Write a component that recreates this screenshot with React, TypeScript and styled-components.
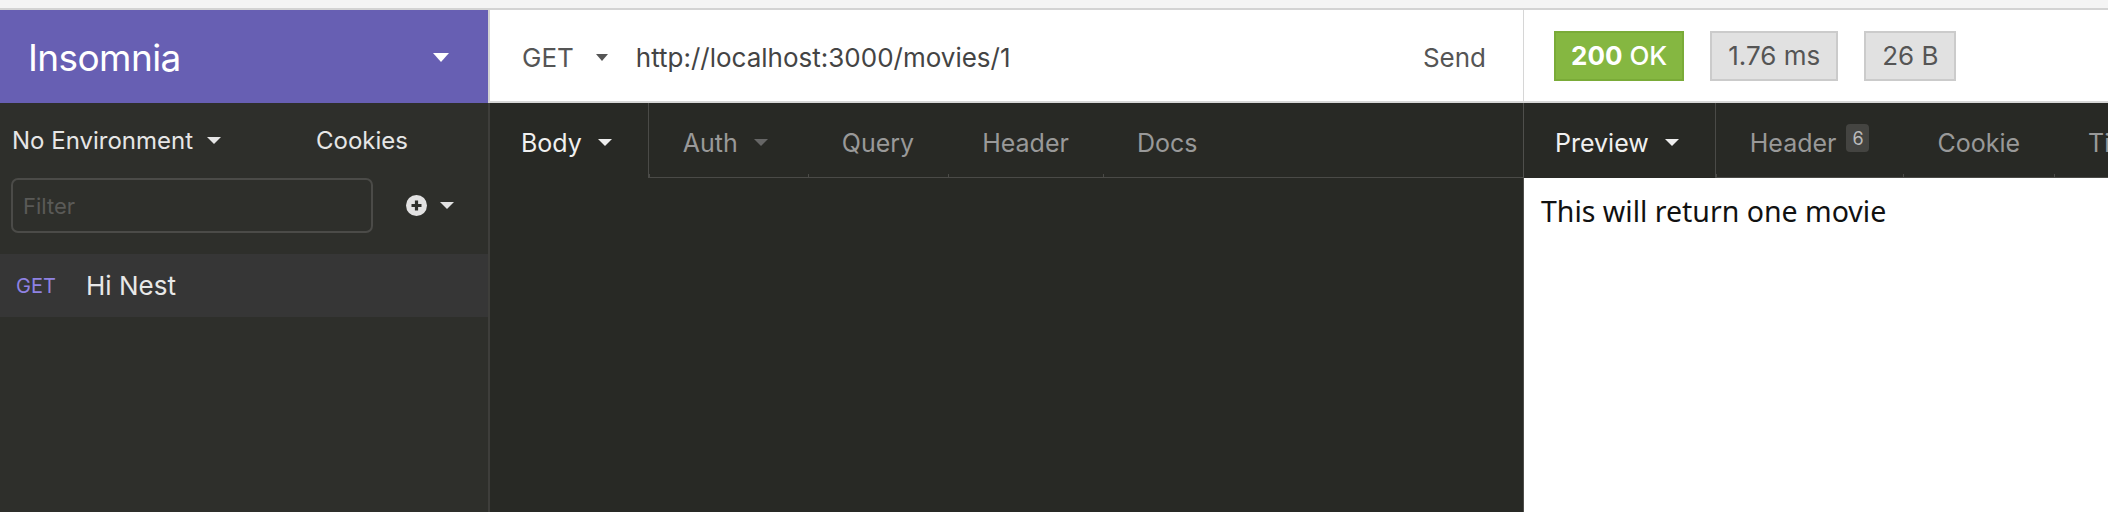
import React from 'react';
import styled, { createGlobalStyle } from 'styled-components';

const GlobalStyle = createGlobalStyle`
  html, body {
    margin: 0;
    padding: 0;
  }
  body {
    font-family: Inter, "Liberation Sans", sans-serif;
    background: #f4f4f4;
  }
`;

interface tabType {
  label: string;
  caret?: boolean;
  badge?: string;
}

const requestTabs: tabType[] = [
  { label: 'Auth', caret: true },
  { label: 'Query' },
  { label: 'Header' },
  { label: 'Docs' },
];

const responseTabs: tabType[] = [
  { label: 'Header', badge: '6' },
  { label: 'Cookie' },
  { label: 'Timeline' },
];

export default function App() {
  return (
    <Window>
      <GlobalStyle />
      <TitleStrip />
      <Workspace>
        <SidebarHeader>
          <AppName>Insomnia</AppName>
          <Caret $w={17} $h={9} $color="#ffffff" />
        </SidebarHeader>

        <UrlBar>
          <Method>GET</Method>
          <Caret $w={13} $h={7} $color="#555555" />
          <Url>http://localhost:3000/movies/1</Url>
          <SendButton>Send</SendButton>
        </UrlBar>

        <ResponseMeta>
          <StatusTag>
            <strong>200</strong> OK
          </StatusTag>
          <MetaTag>1.76 ms</MetaTag>
          <MetaTag>26 B</MetaTag>
        </ResponseMeta>

        <EnvRow>
          <EnvButton>
            No Environment
            <Caret $w={14} $h={7} $color="#e6e6e6" />
          </EnvButton>
          <CookiesButton>Cookies</CookiesButton>
        </EnvRow>

        <RequestTabBar>
          <ActiveTab>
            Body
            <Caret $w={14} $h={7} $color="#eeeeee" />
          </ActiveTab>
          {requestTabs.map((tab) => (
            <Tab key={tab.label}>
              {tab.label}
              {tab.caret && <TabCaret $w={14} $h={7} $color="#666666" />}
            </Tab>
          ))}
        </RequestTabBar>

        <ResponseTabBar>
          <ActiveTab>
            Preview
            <Caret $w={14} $h={7} $color="#eeeeee" />
          </ActiveTab>
          {responseTabs.map((tab) => (
            <Tab key={tab.label}>
              {tab.label}
              {tab.badge && <Bubble>{tab.badge}</Bubble>}
            </Tab>
          ))}
        </ResponseTabBar>

        <SidebarBody>
          <FilterRow>
            <FilterInput placeholder="Filter" />
            <AddButton>
              <svg width="21" height="21" viewBox="0 0 21 21">
                <circle cx="10.5" cy="10.5" r="10.5" fill="#e2e2e2" />
                <path
                  d="M10.5 5.5v10M5.5 10.5h10"
                  stroke="#2e2f2b"
                  strokeWidth="3.2"
                />
              </svg>
              <Caret $w={14} $h={7} $color="#e2e2e2" />
            </AddButton>
          </FilterRow>
          <RequestItem>
            <MethodTag>GET</MethodTag>
            <RequestName>Hi Nest</RequestName>
          </RequestItem>
        </SidebarBody>

        <RequestBody />

        <ResponseBody>This will return one movie</ResponseBody>
      </Workspace>
    </Window>
  );
}

const Window = styled.div`
  width: 2108px;
  height: 512px;
  display: flex;
  flex-direction: column;
  overflow: hidden;
`;
const TitleStrip = styled.div`
  height: 8px;
  background: #f4f4f4;
  border-bottom: 2px solid #d3d3d3;
`;
const Workspace = styled.div`
  flex: 1;
  display: grid;
  grid-template-columns: 488px 1036px minmax(0, 1fr);
  grid-template-rows: 93px 75px 1fr;
  min-height: 0;
`;
const Caret = styled.span<{ $w: number; $h: number; $color: string }>`
  display: inline-block;
  flex: none;
  width: 0;
  height: 0;
  border-left: ${({ $w }) => $w / 2}px solid transparent;
  border-right: ${({ $w }) => $w / 2}px solid transparent;
  border-top: ${({ $h }) => $h}px solid ${({ $color }) => $color};
`;
const TabCaret = styled(Caret)`
  margin-right: 6px;
`;

/* top row */
const SidebarHeader = styled.div`
  background: #675fb3;
  display: flex;
  align-items: center;
  justify-content: space-between;
  padding: 2px 39px 0 28px;
`;
const AppName = styled.span`
  color: #ffffff;
  font-size: 37px;
  letter-spacing: -0.6px;
`;
const UrlBar = styled.div`
  background: #ffffff;
  border-left: 2px solid #d3d3d3;
  border-right: 1px solid #d6d6d6;
  border-bottom: 2px solid #d6d6d6;
  display: flex;
  align-items: center;
  padding: 4px 37px 0 32px;
  font-size: 26px;
  color: #555555;
`;
const Method = styled.span`
  margin-right: 22px;
`;
const Url = styled.span`
  flex: 1;
  margin-left: 28px;
  color: #444444;
`;
const SendButton = styled.span`
  color: #555555;
`;
const ResponseMeta = styled.div`
  background: #ffffff;
  border-bottom: 2px solid #d6d6d6;
  display: flex;
  align-items: center;
  gap: 26px;
  padding: 0 0 0 30px;
`;
const MetaTag = styled.span`
  height: 50px;
  box-sizing: border-box;
  display: flex;
  align-items: center;
  padding: 0 16px;
  background: #e1e1e1;
  border: 2px solid #cbcbcb;
  color: #555555;
  font-size: 26px;
`;
const StatusTag = styled(MetaTag)`
  padding: 0 15px;
  background: #85b741;
  border-color: #7aab38;
  color: #ffffff;
  font-weight: 500;
  white-space: pre;
  strong {
    font-weight: 700;
  }
`;

/* tab row */
const EnvRow = styled.div`
  background: #2e2f2b;
  display: flex;
  align-items: center;
  padding: 0 83px 0 12px;
  font-size: 24px;
  color: #e6e6e6;
`;
const EnvButton = styled.span`
  flex: 1;
  display: flex;
  align-items: center;
  gap: 14px;
`;
const CookiesButton = styled.span`
  margin-right: -3px;
`;
const TabBar = styled.div`
  background: #282925;
  display: flex;
  overflow: hidden;
  min-width: 0;
  box-shadow: inset 0 -1px #4a4a47;
  font-size: 25px;
`;
const RequestTabBar = styled(TabBar)`
  border-left: 2px solid #3e3e3b;
  border-right: 1px solid #4f4f4c;
`;
const ResponseTabBar = styled(TabBar)``;
const Tab = styled.div`
  position: relative;
  flex: none;
  display: flex;
  align-items: center;
  gap: 16px;
  padding: 4px 34px 0;
  color: #999999;
  white-space: nowrap;
  &::after {
    content: '';
    position: absolute;
    left: 0;
    bottom: 0;
    width: 1px;
    height: 4px;
    background: #4a4a47;
  }
`;
const ActiveTab = styled(Tab)`
  padding: 4px 36px 0 31px;
  gap: 16px;
  color: #f0f0f0;
  background: #282925;
  border-right: 1px solid #4a4a47;
  &::after {
    display: none;
  }
`;
const Bubble = styled.span`
  align-self: flex-start;
  margin: 17px 0 0 -6px;
  min-width: 23px;
  height: 28px;
  box-sizing: border-box;
  padding: 0 5px;
  border-radius: 4px;
  background: #444441;
  color: #bbbbbb;
  font-size: 18px;
  display: flex;
  align-items: center;
  justify-content: center;
`;

/* body row */
const SidebarBody = styled.div`
  background: #2e2f2b;
  display: flex;
  flex-direction: column;
`;
const FilterRow = styled.div`
  display: flex;
  align-items: center;
  padding: 0 11px;
  height: 55px;
  margin-bottom: 21px;
`;
const FilterInput = styled.input`
  width: 362px;
  height: 55px;
  box-sizing: border-box;
  border: 2px solid #4b4b48;
  border-radius: 7px;
  background: transparent;
  padding: 0 10px;
  font-family: inherit;
  font-size: 22px;
  color: #dddddd;
  outline: none;
  &::placeholder {
    color: #5a5a57;
  }
`;
const AddButton = styled.span`
  display: flex;
  align-items: center;
  gap: 13px;
  margin-left: 33px;
`;
const RequestItem = styled.div`
  height: 63px;
  background: #363636;
  display: flex;
  align-items: center;
  padding-left: 16px;
`;
const MethodTag = styled.span`
  width: 70px;
  font-size: 20px;
  color: #8f82e3;
`;
const RequestName = styled.span`
  font-size: 26px;
  color: #e8e8e8;
`;
const RequestBody = styled.div`
  background: #282925;
  border-left: 2px solid #3e3e3b;
  border-right: 1px solid #4f4f4c;
`;
const ResponseBody = styled.div`
  background: #ffffff;
  padding: 14px 17px;
  font-family: "Noto Sans", sans-serif;
  font-size: 28.5px;
  color: #111111;
`;
